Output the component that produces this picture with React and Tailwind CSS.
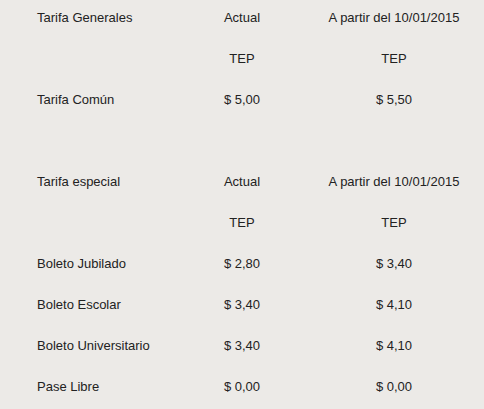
import React from "react";

const rows = [
  ["Tarifa Generales", "Actual", "A partir del 10/01/2015"],
  ["", "TEP", "TEP"],
  ["Tarifa Común", "$ 5,00", "$ 5,50"],
  ["", "", ""],
  ["Tarifa especial", "Actual", "A partir del 10/01/2015"],
  ["", "TEP", "TEP"],
  ["Boleto Jubilado", "$ 2,80", "$ 3,40"],
  ["Boleto Escolar", "$ 3,40", "$ 4,10"],
  ["Boleto Universitario", "$ 3,40", "$ 4,10"],
  ["Pase Libre", "$ 0,00", "$ 0,00"],
];

const App = () => {
  return (
    <div
      className="w-[484px] h-[409px] overflow-hidden bg-[#eceae7] text-[#222] text-[13px] pl-[37px]"
      style={{ fontFamily: '"Liberation Sans", Arial, sans-serif' }}
    >
      {rows.map((r, i) => (
        <div key={i} className="grid grid-cols-[143px_124px_180px] h-[41px] pt-[10px] leading-[15px]">
          <div>{r[0]}</div>
          <div className="text-center">{r[1]}</div>
          <div className="text-center whitespace-nowrap">{r[2]}</div>
        </div>
      ))}
    </div>
  );
};

export default App;
